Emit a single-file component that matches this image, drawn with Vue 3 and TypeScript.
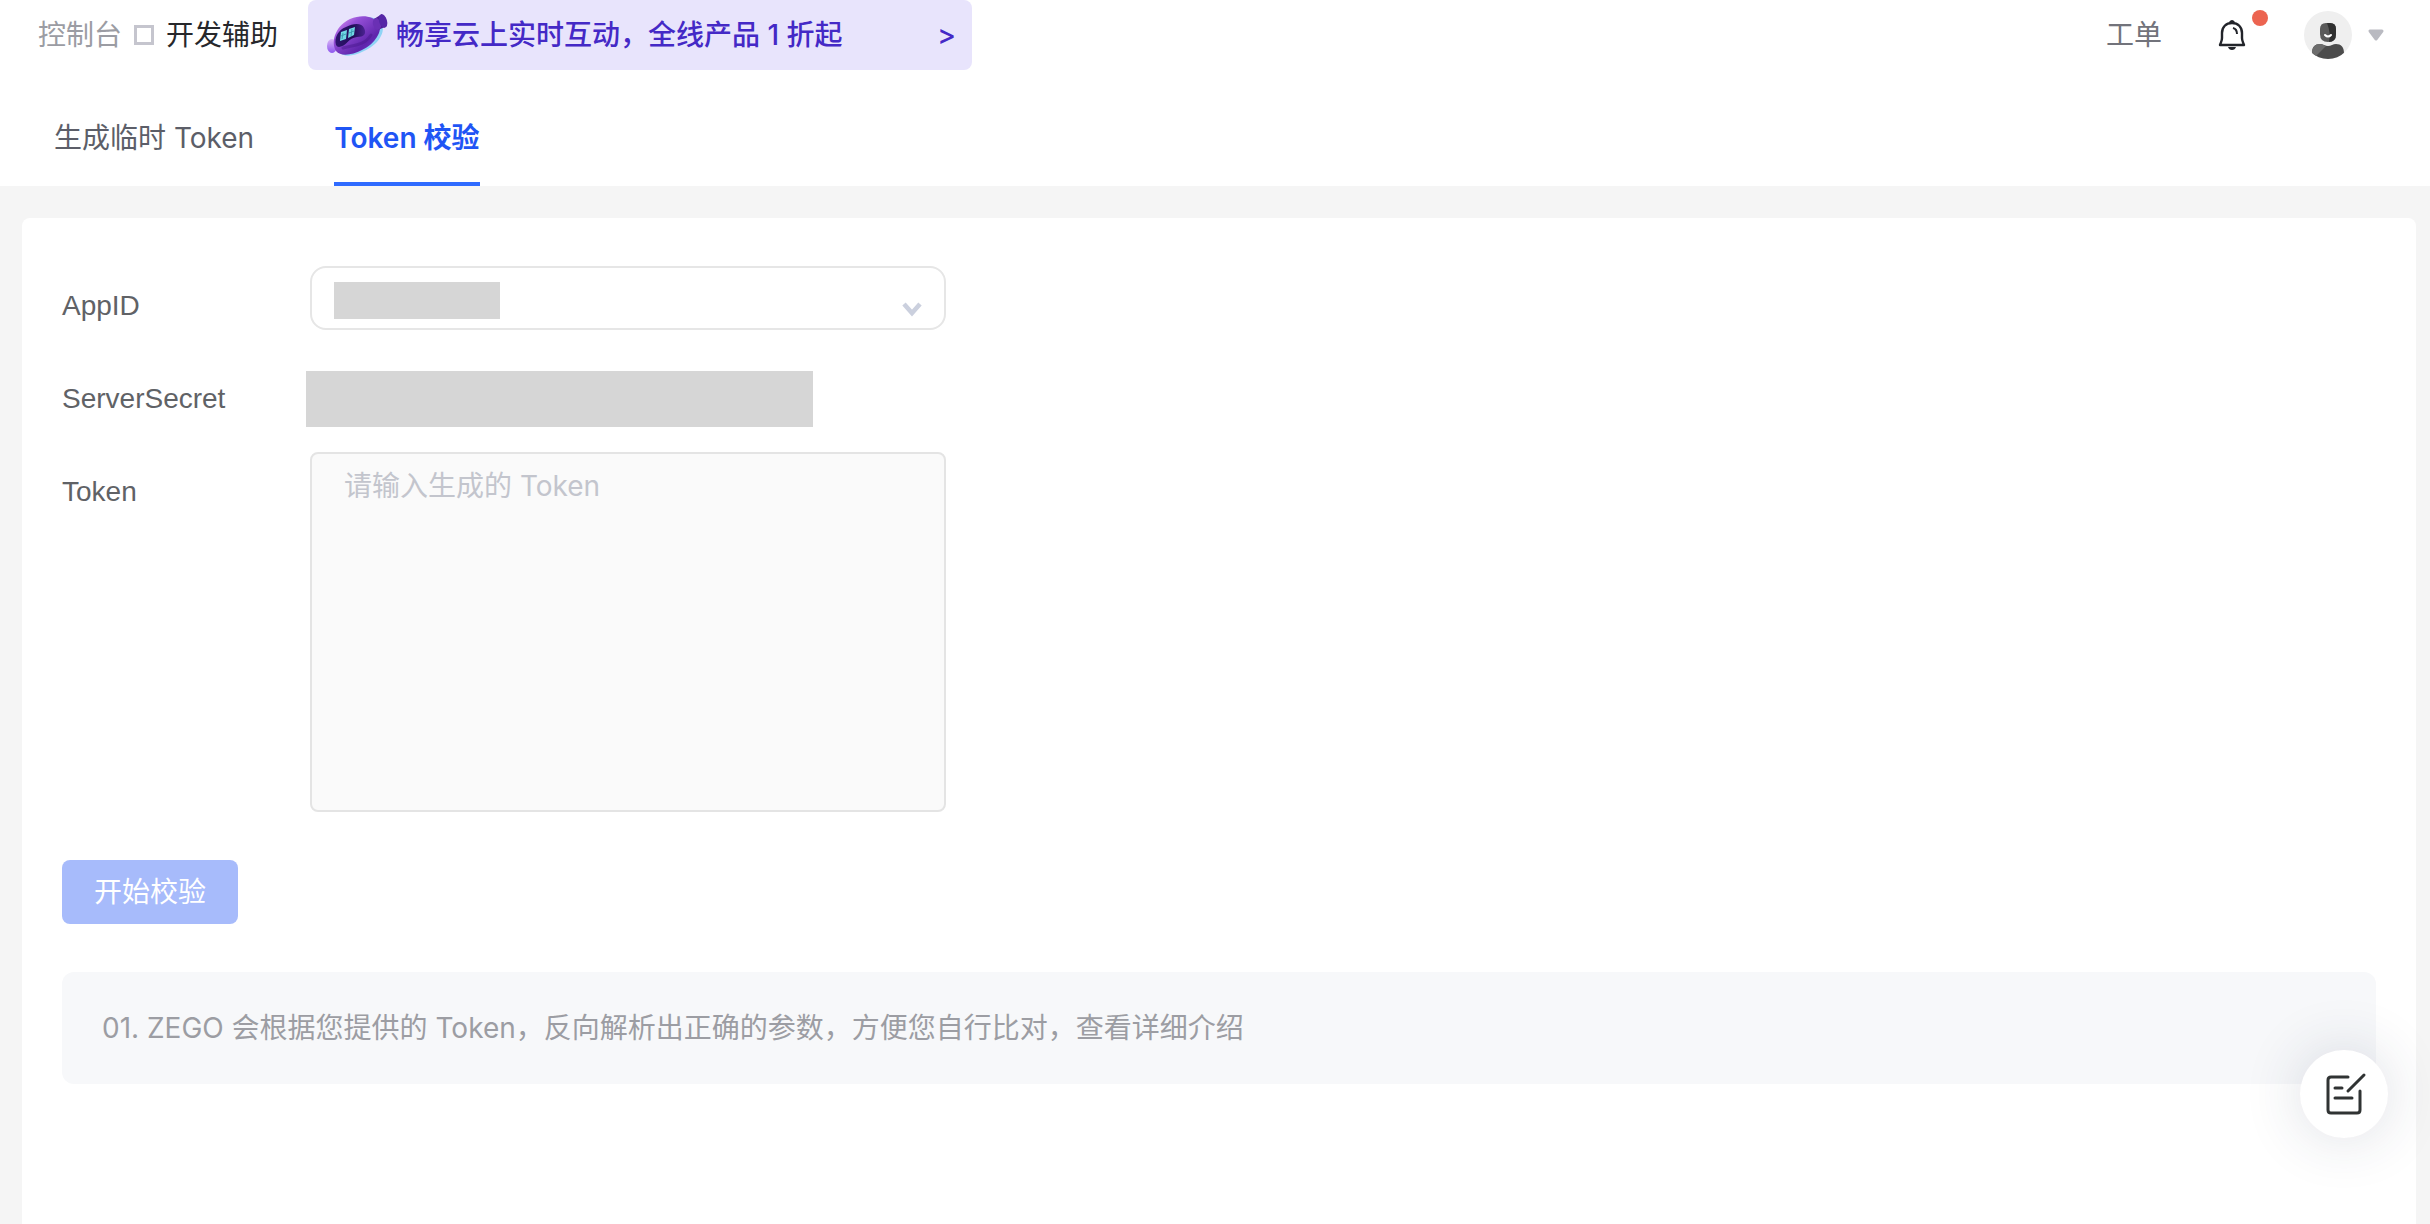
<script setup lang="ts">
import { ref } from 'vue'

interface Tab {
  id: string
  label: string
}

const tabs: Tab[] = [
  { id: 'generate', label: '生成临时 Token' },
  { id: 'verify', label: 'Token 校验' },
]
const activeTab = ref('verify')
const appId = ref('')
const token = ref('')
</script>

<template>
  <div class="page">
    <header class="topbar">
      <nav class="crumbs" aria-label="breadcrumb">
        <a class="crumb" href="#">控制台</a>
        <span class="crumb-sep"></span>
        <span class="crumb-current">开发辅助</span>
      </nav>
      <a class="promo" href="#">
        <svg class="promo-art" width="64" height="44" viewBox="0 0 64 44" aria-hidden="true">
          <defs>
            <linearGradient id="body" x1="0" y1="0" x2="1" y2="1">
              <stop offset="0" stop-color="#f0a8f5" />
              <stop offset="0.3" stop-color="#9550d8" />
              <stop offset="0.7" stop-color="#5f25ac" />
              <stop offset="1" stop-color="#7a48dc" />
            </linearGradient>
            <linearGradient id="face" x1="0" y1="0" x2="1" y2="0">
              <stop offset="0" stop-color="#2f1470" />
              <stop offset="0.6" stop-color="#210e58" />
              <stop offset="1" stop-color="#4b2393" />
            </linearGradient>
            <linearGradient id="tail" x1="0" y1="0" x2="0" y2="1">
              <stop offset="0" stop-color="#d9b6f6" />
              <stop offset="1" stop-color="#8d55ee" />
            </linearGradient>
          </defs>
          <ellipse cx="6" cy="33" rx="5" ry="7" fill="url(#tail)" />
          <path d="M13 39C4 28 12 13 26 7C39 2 51 3 56 11C60 21 50 33 38 38C28 43 18 45 13 39Z" fill="#8fd4f5" />
          <path d="M10 38C4 27 11 12 24 6C36 1 47 3 53 10C57 18 49 31 36 37C26 42 15 44 10 38Z" fill="url(#body)" />
          <path d="M10 32C8 25 12 17 20 14C28 10 36 10 38 15C41 21 38 24 31 24C22 25 21 33 13 34Q11 34 10 32Z" fill="url(#face)" />
          <path d="M15 19L21 17L20 26L14 28ZM23 16L29 14L28 22L22 25Z" fill="#70d8e4" />
          <path d="M17 20L16 26M15 23L20 21M26 16L25 23M23 20L28 18" stroke="#3f9db4" fill="none" />
          <path d="M17 35C27 32 38 33 45 22" stroke="#441689" stroke-width="3" stroke-linecap="round" fill="none" opacity="0.45" />
          <path d="M48 6L56 1L61 13L52 17Z" fill="#4f1d91" />
          <ellipse cx="51" cy="11" rx="4" ry="6" fill="#6a30b4" transform="rotate(-16 51 11)" />
          <ellipse cx="57" cy="8" rx="4" ry="7" fill="#5526a6" transform="rotate(-16 57 8)" />
        </svg>
        <span class="promo-text">畅享云上实时互动，全线产品 1 折起</span>
        <span class="promo-more">&gt;</span>
      </a>
      <div class="tools">
        <a class="ticket" href="#">工单</a>
        <button class="bell" type="button" aria-label="通知">
          <svg width="28" height="30" viewBox="0 0 28 30" aria-hidden="true">
            <path d="M2 25C3 22 4 21 4 18V13C4 7 8 3 14 3S24 7 24 13V18C24 21 25 22 26 25Z" fill="none" stroke="#22242a" stroke-width="2.4" stroke-linejoin="round" />
            <path d="M11 2Q14 -2 17 2ZM10 27H18Q17 30 14 30T10 27Z" fill="#22242a" />
            <path d="M15 8Q19 9 19 14" fill="none" stroke="#22242a" stroke-width="2" />
          </svg>
          <span class="badge"></span>
        </button>
        <button class="account" type="button" aria-label="账号">
          <svg width="48" height="48" viewBox="0 0 48 48" aria-hidden="true">
            <defs><clipPath id="disc"><circle cx="24" cy="24" r="24" /></clipPath></defs>
            <circle cx="24" cy="24" r="24" fill="#efefef" />
            <g clip-path="url(#disc)">
              <path d="M8 42C8 36 11 33 16 33C19 33 21 35 24 35S29 33 32 33C37 33 40 36 40 42V48H8Z" fill="#4c4c4c" />
              <path d="M8 42C8 36 11 33 16 33C18 33 20 34 22 35L12 45H8Z" fill="#6c6c6c" />
              <path d="M16 18Q16 12 22 12H26Q32 12 32 18V23Q32 31 24 31T16 23Z" fill="#5a5a5a" />
              <path d="M23 12H26Q32 12 32 18V23Q32 31 25 31Q27 22 23 12Z" fill="#303030" />
              <path d="M21 24Q24 27 27 24" stroke="#fff" stroke-width="2" stroke-linecap="round" fill="none" />
            </g>
          </svg>
          <svg width="16" height="12" viewBox="0 0 16 12" aria-hidden="true">
            <path d="M2 2H14L8 10Z" fill="#b9bac1" stroke="#b9bac1" stroke-width="3" stroke-linejoin="round" />
          </svg>
        </button>
      </div>
    </header>

    <nav class="tabs">
      <button
        v-for="tab in tabs"
        :key="tab.id"
        type="button"
        class="tab"
        :class="{ active: tab.id === activeTab }"
        @click="activeTab = tab.id"
      >{{ tab.label }}</button>
    </nav>

    <main class="card">
      <form class="form" @submit.prevent>
        <div class="row">
          <label class="label top-label" for="app-id">AppID</label>
          <div class="select-wrap">
            <select id="app-id" v-model="appId" class="select">
              <option value=""></option>
            </select>
            <span class="mask mask-app"></span>
            <svg class="chevron" width="20" height="18" viewBox="0 0 20 18" aria-hidden="true">
              <path d="M2 3L10 12L18 3" fill="none" stroke="#cbd0de" stroke-width="4.5" />
            </svg>
          </div>
        </div>
        <div class="row secret-row">
          <span class="label">ServerSecret</span>
          <span class="mask mask-secret"></span>
        </div>
        <div class="row">
          <label class="label top-label" for="token">Token</label>
          <textarea id="token" v-model="token" class="textarea" placeholder="请输入生成的 Token"></textarea>
        </div>
        <button class="submit" type="submit">开始校验</button>
      </form>
      <p class="note">01. ZEGO 会根据您提供的 Token，反向解析出正确的参数，方便您自行比对，查看详细介绍</p>
    </main>

    <button class="feedback" type="button" aria-label="反馈">
      <svg width="42" height="42" viewBox="-2 0 42 42" aria-hidden="true">
        <g fill="none" stroke="#303333" stroke-width="3" stroke-linecap="round" stroke-linejoin="round">
          <path d="M23 4H6Q3 4 3 7V37Q3 40 6 40H32Q35 40 35 37V18" />
          <path d="M23 18L39 2M10 15H17M10 25H27" />
        </g>
      </svg>
    </button>
  </div>
</template>

<style>
body {
  margin: 0;
  background: #f5f5f5;
}
</style>

<style scoped>
.page {
  display: flex;
  flex-direction: column;
  min-height: 100vh;
  font-family: Inter, "Noto Sans CJK SC", sans-serif;
  font-size: 28px;
  line-height: 40px;
  color: #606266;
}
.page * {
  box-sizing: border-box;
}
button,
select,
textarea {
  margin: 0;
  padding: 0;
  border: 0;
  background: none;
  font: inherit;
  color: inherit;
}
a {
  color: inherit;
  text-decoration: none;
}
svg {
  display: block;
  flex: none;
  overflow: visible;
}
.topbar {
  display: flex;
  align-items: center;
  height: 70px;
  padding: 0 46px 0 38px;
  background: #fff;
}
.crumbs {
  display: flex;
  align-items: center;
  gap: 12px;
  width: 270px;
}
.crumb {
  color: #9b9ca3;
}
.crumb-sep {
  width: 20px;
  height: 20px;
  border: 3px solid #c5c5ce;
}
.crumb-current {
  color: #26272b;
}
.promo {
  display: flex;
  align-items: center;
  width: 664px;
  height: 70px;
  padding: 0 16px 0 18px;
  border-radius: 8px;
  background: #e8e4fc;
  color: #4429c6;
  font-weight: 500;
}
.promo-text {
  margin-left: 6px;
}
.promo-more {
  margin-left: auto;
}
.tools {
  display: flex;
  align-items: center;
  margin-left: auto;
}
.ticket {
  color: #72737b;
}
.bell {
  position: relative;
  margin-left: 56px;
}
.badge {
  position: absolute;
  top: -10px;
  right: -22px;
  width: 16px;
  height: 16px;
  border-radius: 50%;
  background: #ec6450;
}
.account {
  display: flex;
  align-items: center;
  gap: 16px;
  margin-left: 58px;
}
.tabs {
  display: flex;
  gap: 80px;
  height: 116px;
  padding: 0 54px;
  background: #fff;
}
.tab {
  padding-top: 24px;
  border-bottom: 4px solid transparent;
  color: #5c5e68;
}
.tab.active {
  border-bottom-color: #2f6bff;
  color: #1f55f5;
  font-weight: 600;
}
.card {
  flex: 1;
  margin: 32px 14px 0 22px;
  padding: 48px 40px;
  border-radius: 8px 8px 0 0;
  background: #fff;
}
.form {
  display: flex;
  flex-direction: column;
  align-items: flex-start;
}
.row {
  display: flex;
}
.label {
  width: 248px;
  font-family: "Liberation Sans", "Noto Sans CJK SC", sans-serif;
}
.top-label {
  padding-top: 20px;
}
.select-wrap {
  position: relative;
}
.select {
  display: block;
  width: 636px;
  height: 64px;
  border: 2px solid #e6e6e6;
  border-radius: 16px;
  appearance: none;
}
.mask {
  background: #d6d6d6;
}
.mask-app {
  position: absolute;
  top: 16px;
  left: 24px;
  width: 166px;
  height: 37px;
  pointer-events: none;
}
.chevron {
  position: absolute;
  top: 35px;
  right: 24px;
  pointer-events: none;
}
.secret-row {
  align-items: center;
  margin: 41px 0 25px;
}
.secret-row .label {
  width: 244px;
}
.mask-secret {
  width: 507px;
  height: 56px;
}
.textarea {
  display: block;
  width: 636px;
  height: 360px;
  padding: 12px 32px;
  border: 2px solid #e4e4e4;
  border-radius: 8px;
  background: #fafafa;
  resize: none;
}
.textarea::placeholder {
  color: #c3c5cd;
  opacity: 1;
}
.submit {
  height: 64px;
  margin-top: 48px;
  padding: 0 32px;
  border-radius: 8px;
  background: #a7bbfb;
  color: #fff;
}
.note {
  margin: 48px 0 0;
  padding: 36px 40px;
  border-radius: 12px;
  background: #f7f8fa;
  color: #9c9da3;
}
.feedback {
  position: fixed;
  right: 42px;
  bottom: 86px;
  display: flex;
  align-items: center;
  justify-content: center;
  width: 88px;
  height: 88px;
  border-radius: 50%;
  background: #fff;
  box-shadow: 0 0 60px rgba(40, 50, 80, 0.16);
}
</style>
